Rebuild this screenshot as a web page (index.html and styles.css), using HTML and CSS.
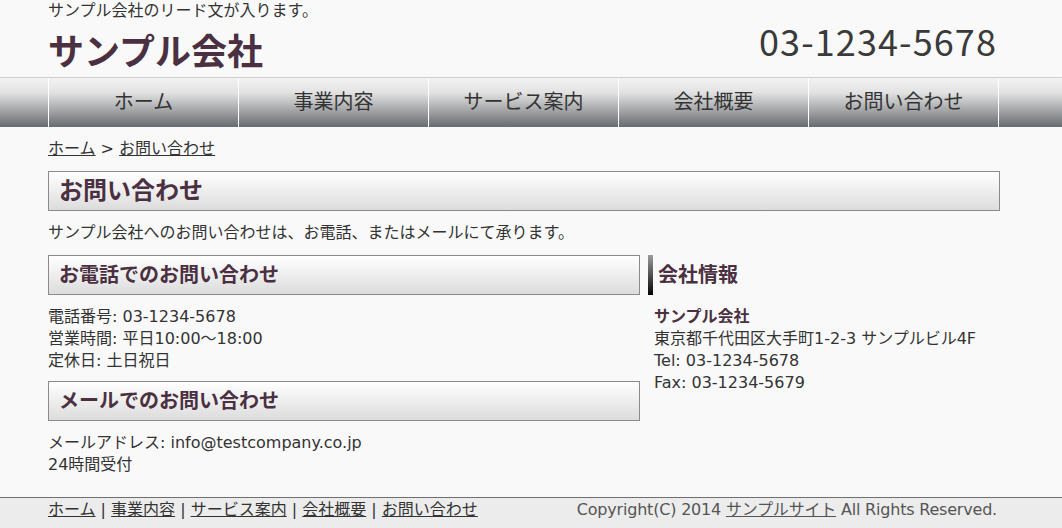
FILE: index.html
```html
<!DOCTYPE html>
<html lang="ja">
<head>
<meta charset="utf-8">
<title>お問い合わせ | サンプル会社</title>
<link rel="stylesheet" href="styles.css">
</head>
<body>
<header class="site-header">
  <div class="wrap">
    <p class="lead">サンプル会社のリード文が入ります。</p>
    <div class="brand-row">
      <h1 class="site-title">サンプル会社</h1>
      <p class="site-tel">03-1234-5678</p>
    </div>
  </div>
</header>
<nav class="global-nav">
  <ul class="wrap nav-list">
    <li class="nav-item"><a href="#">ホーム</a></li>
    <li class="nav-item"><a href="#">事業内容</a></li>
    <li class="nav-item"><a href="#">サービス案内</a></li>
    <li class="nav-item"><a href="#">会社概要</a></li>
    <li class="nav-item"><a href="#">お問い合わせ</a></li>
  </ul>
</nav>
<main class="wrap main">
  <p class="breadcrumb"><a href="#">ホーム</a> &gt; <a href="#">お問い合わせ</a></p>
  <h2 class="page-title">お問い合わせ</h2>
  <p class="text">サンプル会社へのお問い合わせは、お電話、またはメールにて承ります。</p>
  <div class="columns">
    <section class="col-main">
      <h3 class="box-title">お電話でのお問い合わせ</h3>
      <p class="text">電話番号: 03-1234-5678<br>営業時間: 平日10:00〜18:00<br>定休日: 土日祝日</p>
      <h3 class="box-title">メールでのお問い合わせ</h3>
      <p class="text">メールアドレス: info@testcompany.co.jp<br>24時間受付</p>
    </section>
    <aside class="col-side">
      <h3 class="side-title">会社情報</h3>
      <p class="text side-text"><strong class="side-name">サンプル会社</strong><br>東京都千代田区大手町1-2-3 サンプルビル4F<br>Tel: 03-1234-5678<br>Fax: 03-1234-5679</p>
    </aside>
  </div>
</main>
<footer class="site-footer">
  <div class="wrap footer-row">
    <p class="footer-links"><a href="#">ホーム</a> | <a href="#">事業内容</a> | <a href="#">サービス案内</a> | <a href="#">会社概要</a> | <a href="#">お問い合わせ</a></p>
    <p class="copyright">Copyright(C) 2014 <a href="#">サンプルサイト</a> All Rights Reserved.</p>
  </div>
</footer>
</body>
</html>
```
FILE: styles.css
```css
* { box-sizing: border-box; }
html, body { margin: 0; padding: 0; }
body {
  background: #f9f9f9;
  color: #333;
  font-family: "DejaVu Sans", "Noto Sans CJK JP", sans-serif;
  font-size: 16px;
  line-height: 22px;
}
p, h1, h2, h3, ul { margin: 0; padding: 0; }
a { color: inherit; }

.wrap { width: 952px; margin-left: 48px; }

.lead { font-size: 16px; line-height: 22px; color: #333; }
.brand-row { display: flex; justify-content: space-between; align-items: flex-start; padding-right: 3px; }
.site-title {
  font-family: "Noto Sans CJK JP", sans-serif;
  font-size: 36px; line-height: 48px; margin-top: 3px; margin-bottom: 4px;
  color: #4a3040; font-weight: bold;
}
.site-tel {
  font-family: "Noto Sans CJK JP", sans-serif;
  font-size: 36px; line-height: 36px; color: #3a3a3a; letter-spacing: 1.1px;
}

.global-nav {
  border-top: 1px solid #cfcfcf;
  height: 50px;
  background: linear-gradient(#f3f3f3 0%, #e2e2e2 30%, #a5a7a9 65%, #676b6f 100%);
}
.nav-list { list-style: none; display: flex; height: 49px; }
.nav-item {
  width: 190px; border-left: 1px solid #fff; padding-bottom: 2px;
  display: flex; align-items: center; justify-content: center;
}
.nav-item:last-child { border-right: 1px solid #fff; width: 191px; }
.nav-item a { text-decoration: none; color: #333; font-size: 20px; line-height: 24px; }

.main { padding-top: 10px; padding-bottom: 21px; }
.breadcrumb { padding-top: 1px; margin-bottom: 11px; color: #333; }

.page-title {
  height: 40px; border: 1px solid #8a8a8a;
  background: linear-gradient(#ffffff, #dcdcdc);
  font-size: 24px; line-height: 38px; padding-left: 10px;
  color: #4a3040; font-weight: bold;
  margin-bottom: 10px;
}
.text { padding-top: 1px; margin-bottom: 9px; color: #333; }

.columns { display: flex; gap: 8px; margin-top: 11px; }
.col-main { width: 592px; }
.col-side { width: 352px; }
.col-main .text:last-child { margin-bottom: 0; }

.box-title {
  height: 40px; border: 1px solid #8a8a8a;
  background: linear-gradient(#ffffff, #dcdcdc);
  font-size: 20px; line-height: 38px; padding-left: 10px;
  color: #4a3040; font-weight: bold;
  margin-bottom: 10px;
}
.side-title {
  height: 40px; font-size: 20px; line-height: 40px; padding-left: 5px;
  color: #4a3040; font-weight: bold;
  border-left: 5px solid transparent;
  border-image: linear-gradient(#a0a0a0, #000000) 1;
  margin-bottom: 10px;
}
.side-text { padding-left: 6px; }
.side-name { color: #4a3040; }

.site-footer {
  border-top: 1px solid #6f6f6f;
  background: #ececec;
  height: 31px;
}
.footer-row { display: flex; justify-content: space-between; padding-right: 3px; padding-top: 1px; }
.footer-links { color: #333; }
.copyright { color: #555; letter-spacing: -0.2px; }
```
